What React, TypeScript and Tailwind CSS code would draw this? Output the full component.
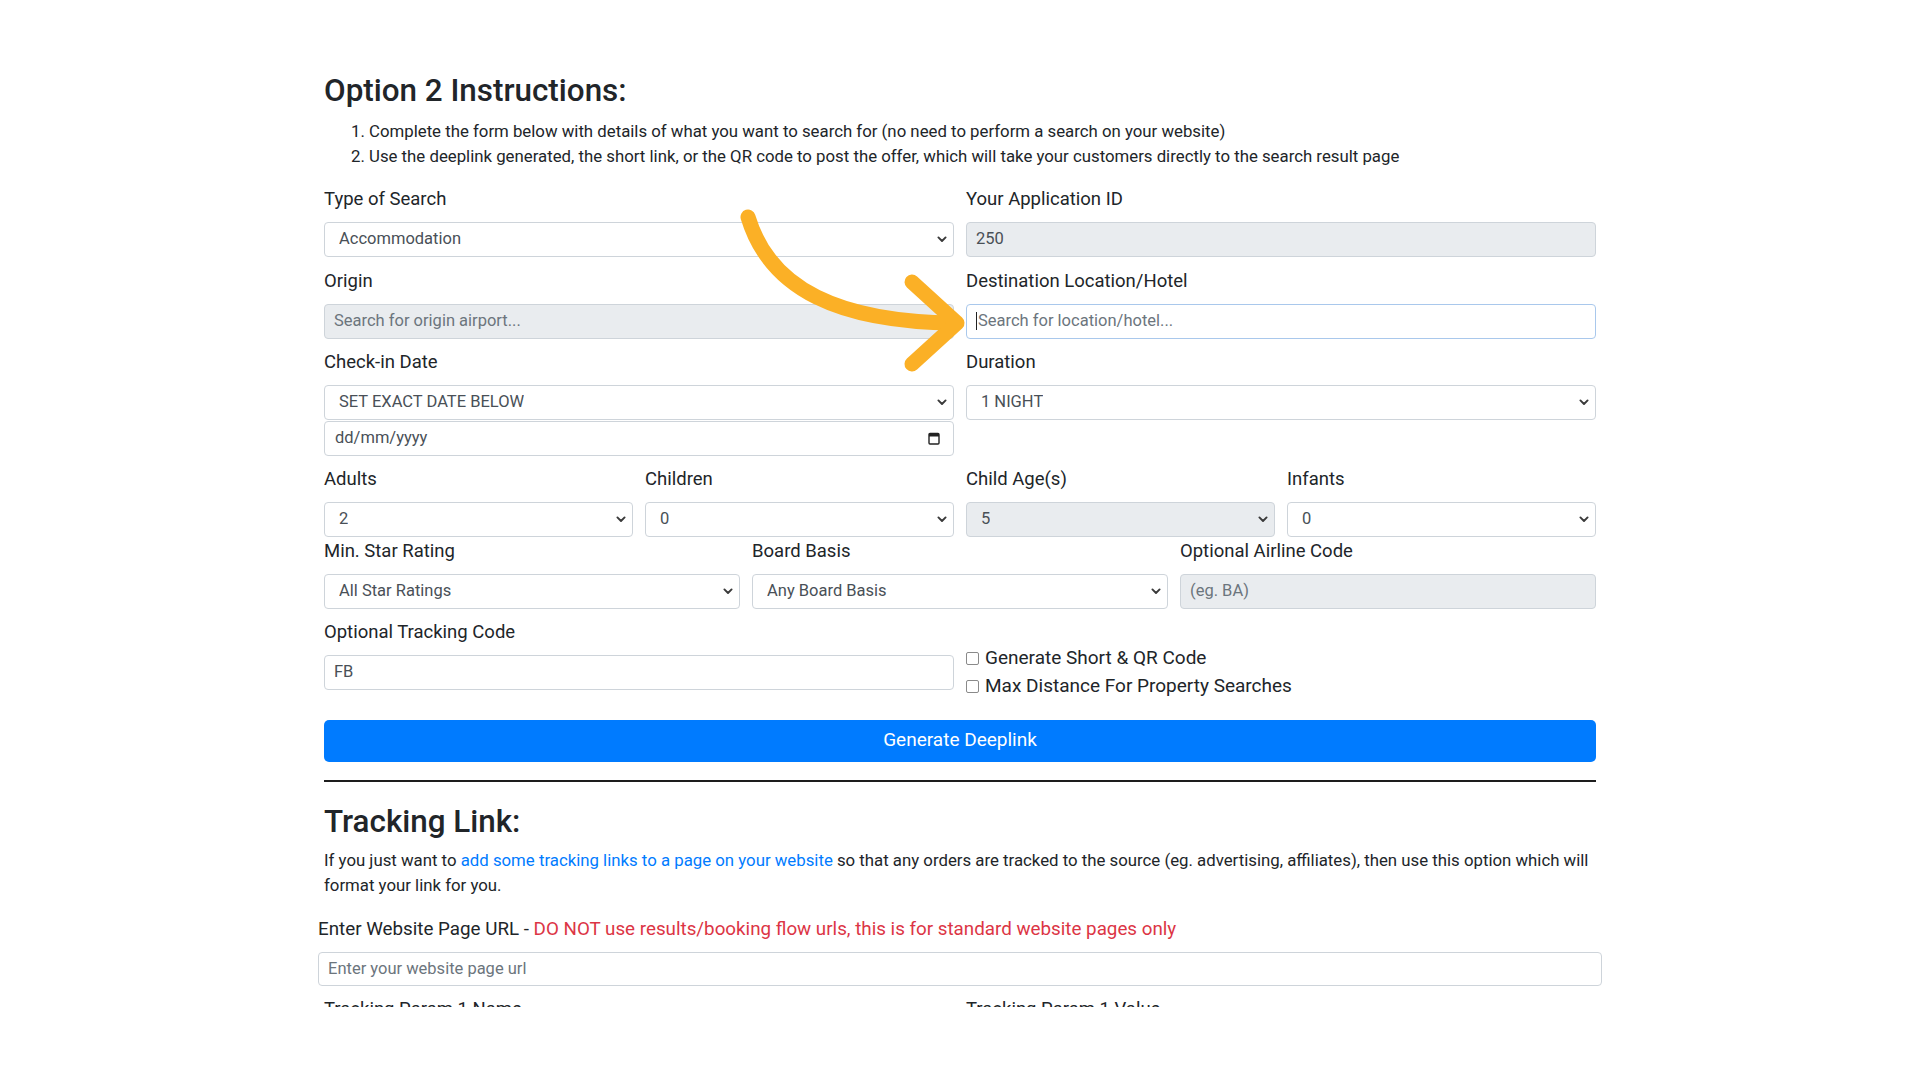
import React from 'react';
import clsx from 'clsx';

// Small native-looking chevron used on all the select boxes
const Chevron = () => (
  <svg width="10" height="7" viewBox="0 0 10 7" className="shrink-0">
    <polyline points="1.4,1.4 5,5 8.6,1.4" fill="none" stroke="#3a3a3a" strokeWidth="1.9" strokeLinecap="round" strokeLinejoin="round" />
  </svg>
);

const CalendarIcon = () => (
  <svg width="12" height="13" viewBox="0 0 12 13" className="shrink-0">
    <rect x="1" y="1.5" width="10" height="10.5" rx="1" fill="none" stroke="#222" strokeWidth="1.4" />
    <rect x="1" y="1.5" width="10" height="3" fill="#222" />
  </svg>
);

const Label = ({ children }: { children: React.ReactNode }) => (
  <div className="mb-[8px] text-[18.5px] leading-[29px] text-[#212529]">{children}</div>
);

const SelectBox = ({ value, disabled }: { value: string; disabled?: boolean }) => (
  <div
    className={clsx(
      'flex h-[35px] items-center justify-between rounded-[4px] border border-[#ced4da] pl-[14px] pr-[6px] text-[16.5px] text-[#495057]',
      disabled ? 'bg-[#e9ecef]' : 'bg-white'
    )}
  >
    <span className="truncate">{value}</span>
    <Chevron />
  </div>
);

const InputBox = ({
  value,
  placeholder,
  disabled,
  focused,
  className
}: {
  value?: string
  placeholder?: string
  disabled?: boolean
  focused?: boolean
  className?: string
}) => (
  <div
    className={clsx(
      'flex h-[35px] items-center rounded-[4px] border pl-[9px] pr-[9px] text-[16.5px]',
      disabled ? 'bg-[#e9ecef]' : 'bg-white',
      focused ? 'border-[#a9c8ec]' : 'border-[#ced4da]',
      className
    )}
  >
    {focused && <span className="mr-[1px] h-[18px] w-px bg-[#222]" />}
    {value
      ? <span className="text-[#495057]">{value}</span>
      : <span className="text-[#6c757d]">{placeholder}</span>}
  </div>
);

const Checkbox = ({ label }: { label: string }) => (
  <div className="flex h-[28px] items-center text-[19px] text-[#212529]">
    <span className="mr-[6px] inline-block h-[13px] w-[13px] rounded-[2px] border border-[#8a8a8a] bg-white" />
    {label}
  </div>
);

// Orange annotation arrow drawn over the form
const Arrow = () => (
  <svg
    className="pointer-events-none absolute left-[730px] top-[200px]"
    width="245"
    height="180"
    viewBox="730 200 245 180"
  >
    <g fill="none" stroke="#fbb026" strokeWidth="15" strokeLinecap="round" strokeLinejoin="round">
      <path d="M 748 217 C 770 290, 840 322, 955 323" />
      <path d="M 912 282 L 957 323 L 912 364" />
    </g>
  </svg>
);

export default function App() {
  return (
    <div className="relative h-[1007px] w-full overflow-hidden bg-white font-['Roboto','Liberation_Sans',sans-serif] text-[#212529]">
      <div className="mx-auto w-[1272px] pt-[71px]">
        <h3 className="text-[31.4px] font-medium leading-[39px]">Option 2 Instructions:</h3>
        <div className="mt-[9px] pl-[27px] text-[16.8px] leading-[24.5px]">
          <div>1. Complete the form below with details of what you want to search for (no need to perform a search on your website)</div>
          <div>2. Use the deeplink generated, the short link, or the QR code to post the offer, which will take your customers directly to the search result page</div>
        </div>

        {/* Search form */}
        <div className="mt-[17px]">
          <div className="mb-[9.5px] grid grid-cols-2 gap-x-[12px]">
            <div>
              <Label>Type of Search</Label>
              <SelectBox value="Accommodation" />
            </div>
            <div>
              <Label>Your Application ID</Label>
              <InputBox value="250" disabled />
            </div>
          </div>

          <div className="mb-[9.5px] grid grid-cols-2 gap-x-[12px]">
            <div>
              <Label>Origin</Label>
              <InputBox placeholder="Search for origin airport..." disabled />
            </div>
            <div>
              <Label>Destination Location/Hotel</Label>
              <InputBox placeholder="Search for location/hotel..." focused />
            </div>
          </div>

          <div className="mb-[9px] grid grid-cols-2 gap-x-[12px]">
            <div>
              <Label>Check-in Date</Label>
              <SelectBox value="SET EXACT DATE BELOW" />
              <div className="mt-px flex h-[35px] items-center justify-between rounded-[4px] border border-[#ced4da] bg-white pl-[10px] pr-[13px] text-[16.5px] text-[#495057]">
                <span>dd/mm/yyyy</span>
                <CalendarIcon />
              </div>
            </div>
            <div>
              <Label>Duration</Label>
              <SelectBox value="1 NIGHT" />
            </div>
          </div>

          <div className="grid grid-cols-4 gap-x-[12px]">
            <div>
              <Label>Adults</Label>
              <SelectBox value="2" />
            </div>
            <div>
              <Label>Children</Label>
              <SelectBox value="0" />
            </div>
            <div>
              <Label>Child Age(s)</Label>
              <SelectBox value="5" disabled />
            </div>
            <div>
              <Label>Infants</Label>
              <SelectBox value="0" />
            </div>
          </div>

          <div className="mb-[8.5px] grid grid-cols-3 gap-x-[12px]">
            <div>
              <Label>Min. Star Rating</Label>
              <SelectBox value="All Star Ratings" />
            </div>
            <div>
              <Label>Board Basis</Label>
              <SelectBox value="Any Board Basis" />
            </div>
            <div>
              <Label>Optional Airline Code</Label>
              <InputBox placeholder="(eg. BA)" disabled />
            </div>
          </div>

          <div className="grid grid-cols-2 gap-x-[12px]">
            <div>
              <Label>Optional Tracking Code</Label>
              <InputBox value="FB" />
            </div>
            <div className="pt-[27px]">
              <Checkbox label="Generate Short & QR Code" />
              <Checkbox label="Max Distance For Property Searches" />
            </div>
          </div>

          <button className="mt-[19px] flex h-[42px] w-full items-center justify-center rounded-[5px] bg-[#007bff] text-[19px] text-white">
            Generate Deeplink
          </button>
        </div>

        <div className="mt-[18px] h-[2px] bg-[#1d1d1d]" />

        {/* Tracking link section */}
        <h3 className="mt-[20px] text-[31.4px] font-medium leading-[39px]">Tracking Link:</h3>
        <p className="mt-[7.5px] text-[16.8px] leading-[24.5px]">
          If you just want to <a className="text-[#007bff]" href="#">add some tracking links to a page on your website</a> so that any orders are tracked to the source (eg. advertising, affiliates), then use this option which will format your link for you.
        </p>

        <div className="-mx-[6px] mt-[17.5px]">
          <div className="text-[18.8px] leading-[29px]">
            Enter Website Page URL - <span className="text-[#dc3545]">DO NOT use results/booking flow urls, this is for standard website pages only</span>
          </div>
          <div className="mt-[8.5px] flex h-[34px] items-center rounded-[4px] border border-[#ced4da] bg-white pl-[9px] text-[16.5px] text-[#6c757d]">
            Enter your website page url
          </div>
        </div>

        <div className="mt-[9px] grid grid-cols-2 gap-x-[12px]">
          <div className="text-[18.5px] leading-[29px]">Tracking Param 1 Name</div>
          <div className="text-[18.5px] leading-[29px]">Tracking Param 1 Value</div>
        </div>
      </div>

      <Arrow />
    </div>
  );
}
